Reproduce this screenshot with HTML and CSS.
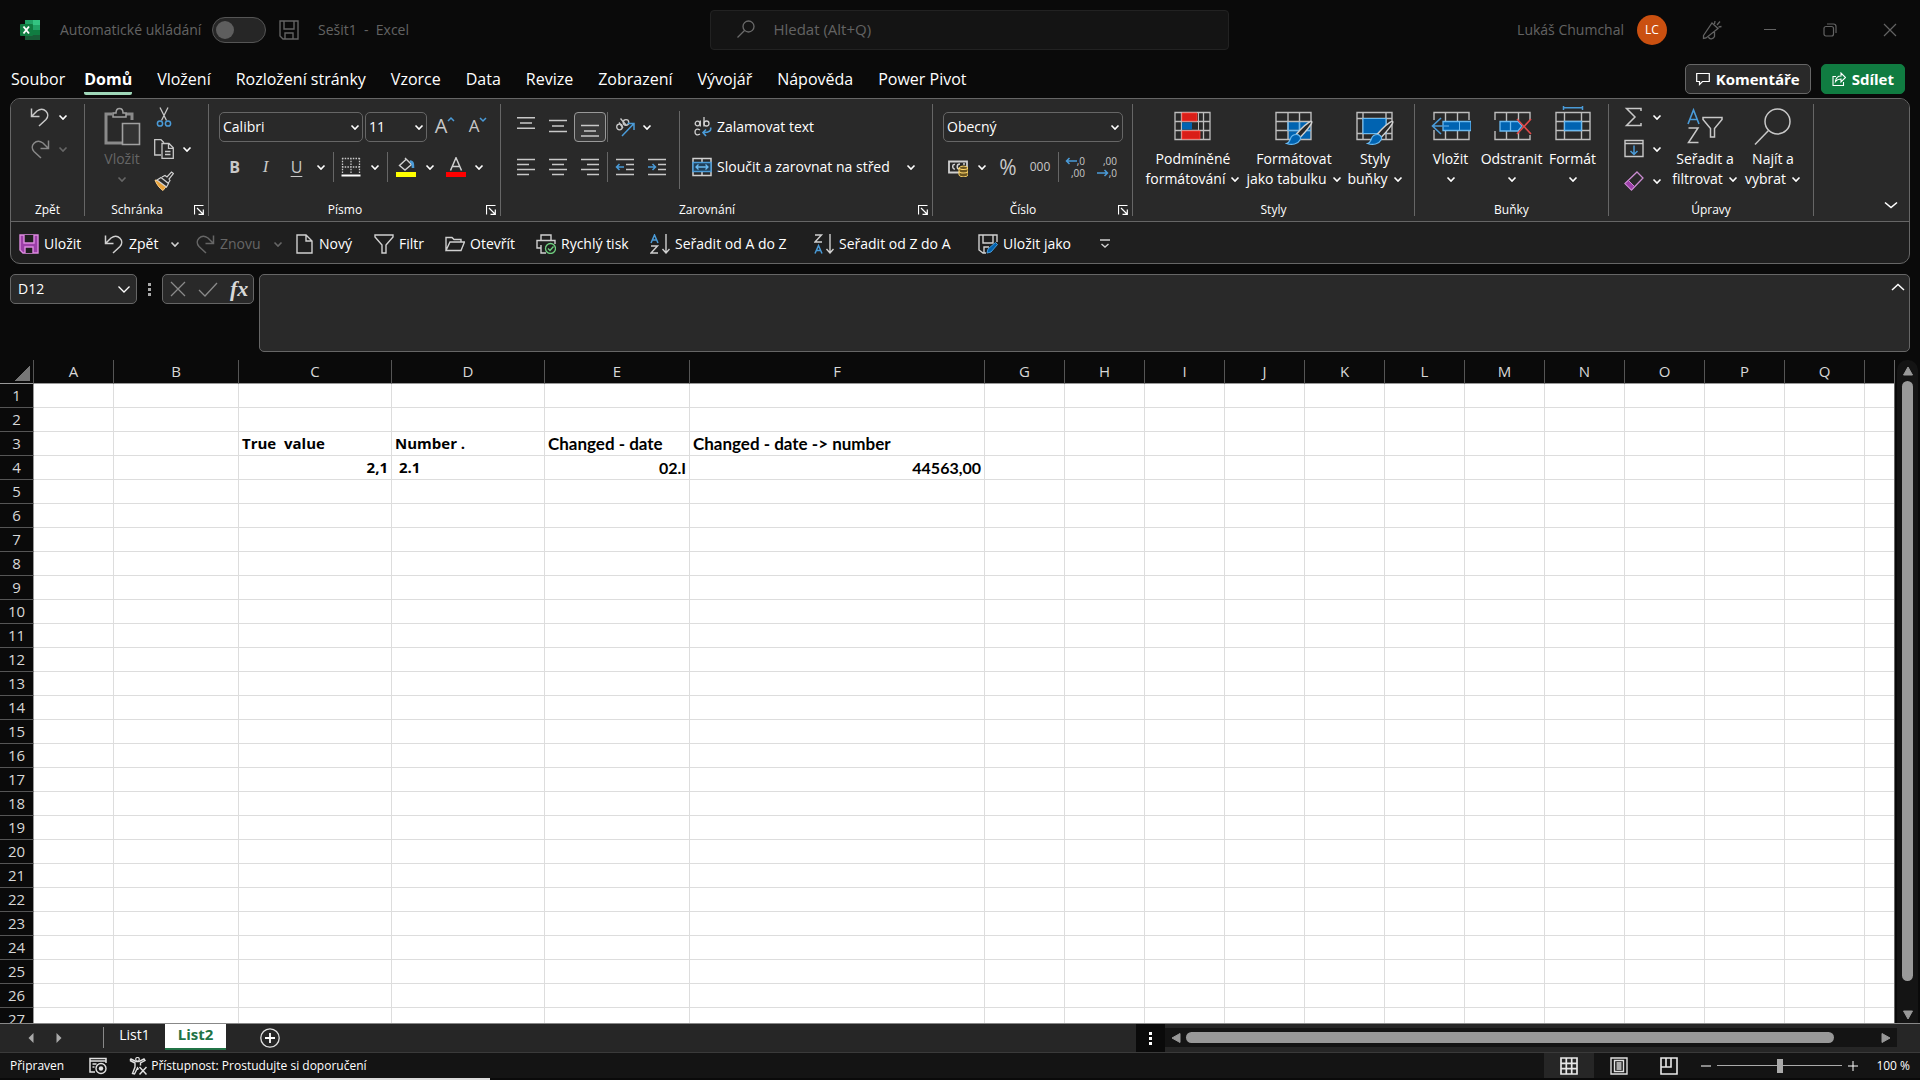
FILE: index.html
```html
<!DOCTYPE html>
<html lang="cs">
<head>
<meta charset="utf-8">
<title>Sešit1 - Excel</title>
<link rel="stylesheet" href="styles.css">
</head>
<body>
<svg class="sprite" aria-hidden="true">
  <symbol id="chev" viewBox="0 0 10 10"><path d="M1.500 3.500L5 7l3.500-3.500" fill="none" stroke="currentColor" stroke-width="1.600"/></symbol>
  <symbol id="undo" viewBox="0 0 20 20"><path d="M1.500 1.500v8h8M1.500 9.500L7 4c7-5 14 3 9 8.500L9 19" fill="none" stroke="currentColor" stroke-width="1.500"/></symbol>
  <symbol id="redo" viewBox="0 0 20 20"><path d="M18.500 1.500v8h-8M18.500 9.500L13 4C6-1-1 7 4 12.500L11 19" fill="none" stroke="currentColor" stroke-width="1.500"/></symbol>
  <symbol id="launch" viewBox="0 0 10 10"><path d="M.500 9.500V.500H9.500M3 3l6 6M9.300 4.500v4.800H4.500" fill="none" stroke="currentColor" stroke-width="1.200"/></symbol>
  <symbol id="save" viewBox="0 0 20 20"><path d="M1 1h18v18H4l-3-3zM5 1v8h10V1M6 19v-6h8v6" fill="none" stroke="currentColor" stroke-width="1.400"/></symbol>
  <symbol id="brush" viewBox="0 0 28 26"><path d="M26 1.500c2 1-7 11.500-11 15.500l-4-3C15 9 24 .500 26 1.500z" fill="#292929" stroke="#d0d0d0" stroke-width="1.500"/><path d="M11 14.500c3 0 5 3 3.500 5.500-2 4-8 5.500-13.500 3.500 3-1 3-2.500 4-5 1-3 3.500-4 6-4z" fill="#0063b1" stroke="#69b9f0" stroke-width="1.200"/></symbol>
</svg>

<header class="titlebar">
  <svg class="i20 logo" viewBox="0 0 20 20"><path d="M5 0h8v5H5z" fill="#21a366"/><path d="M13 0h7v5h-7z" fill="#33c481"/><path d="M5 5h8v5H5z" fill="#107c41"/><path d="M13 5h7v5h-7z" fill="#21a366"/><path d="M5 10h8v10H5z" fill="#185c37"/><path d="M13 10h7v5h-7z" fill="#107c41"/><path d="M13 15h7v5h-7z" fill="#185c37"/><rect y="4" width="13" height="12" rx="1" fill="#107c41"/><path d="M3.500 6.500l5.500 7M9 6.500l-5.500 7" stroke="#fff" stroke-width="1.900"/></svg>
  <label class="autosave" for="autosave">Automatické ukládání</label>
  <input class="toggle" id="autosave" type="checkbox">
  <button class="plain dim" aria-label="Uložit"><svg class="i20"><use href="#save"/></svg></button>
  <span class="docname">Sešit1&nbsp; -&nbsp; Excel</span>
  <div class="search">
    <svg class="i18" viewBox="0 0 18 18"><g fill="none" stroke="#6a6a6a" stroke-width="1.300"><circle cx="11.500" cy="6.500" r="5.500"/><path d="M7.500 10.500L.500 17.500"/></g></svg>
    <input type="text" aria-label="Hledat" placeholder="Hledat (Alt+Q)">
  </div>
  <div class="account">
    <span>Lukáš Chumchal</span>
    <span class="avatar">LC</span>
    <button class="plain mega" aria-label="Novinky"><svg class="i20" viewBox="0 0 20 20"><path d="M1.500 15.500L10 3l6 5.500L4 18l-2.500.500zM6.500 17c1 3 5 2 6-.500V11M12.500 4l.500-3M15 5l3-3.500M16.500 7l3-.500" fill="none" stroke="currentColor" stroke-width="1.300"/></svg></button>
    <button class="plain win" aria-label="Minimalizovat"><svg class="i14" viewBox="0 0 14 14"><path d="M1 6.500h12" stroke="currentColor"/></svg></button>
    <button class="plain win" aria-label="Obnovit"><svg class="i14" viewBox="0 0 14 14"><g fill="none" stroke="currentColor" stroke-width="1.200"><rect x="1" y="3.500" width="9.500" height="9.500" rx="2"/><path d="M4 1h6.500Q13 1 13 3.500V10"/></g></svg></button>
    <button class="plain win" aria-label="Zavřít"><svg class="i14" viewBox="0 0 14 14"><path d="M1 1l12 12M13 1L1 13" stroke="currentColor" stroke-width="1.200"/></svg></button>
  </div>
</header>

<nav class="tabs">
  <a href="#" class="file">Soubor</a><a href="#" class="active">Domů</a><a href="#">Vložení</a><a href="#">Rozložení stránky</a><a href="#">Vzorce</a><a href="#">Data</a><a href="#">Revize</a><a href="#">Zobrazení</a><a href="#">Vývojář</a><a href="#">Nápověda</a><a href="#">Power Pivot</a>
  <div class="tab-actions">
    <button class="pill"><svg class="i14" viewBox="0 0 14 14"><path d="M.700 1.500h12.600v8H6.500L3.500 12.500v-3H.700z" fill="none" stroke="currentColor" stroke-width="1.200"/></svg>Komentáře</button>
    <button class="pill share"><svg class="i14" viewBox="0 0 14 14"><path d="M4 4.500H1v9h10.500V10M3.500 9.500c.500-4 2.500-5.500 5.500-5.500V1l4.500 4.500L9 10V7C6.500 7 5 7.500 3.500 9.500z" fill="none" stroke="currentColor" stroke-width="1.100"/></svg>Sdílet</button>
  </div>
</nav>

<section class="ribbon">
  <div class="groups">
    <div class="group g-undo">
      <div class="body stack">
        <div class="line"><button class="tool s24" aria-label="Zpět"><svg class="i20"><use href="#undo"/></svg></button><button class="drop w22" aria-label="Další"><svg class="i10"><use href="#chev"/></svg></button></div>
        <div class="line off"><button class="tool s24" aria-label="Znovu"><svg class="i20"><use href="#redo"/></svg></button><button class="drop w22" aria-label="Další"><svg class="i10"><use href="#chev"/></svg></button></div>
      </div>
      <div class="caption"><span>Zpět</span></div>
    </div>
    <i class="sep"></i>
    <div class="group g-clip">
      <div class="body">
        <button class="big b60 off"><svg class="pic" viewBox="0 0 40 40"><g fill="none" stroke="#a0a0a0"><path d="M10 8H4v29h17M24 8h6v6" stroke-width="3" stroke="#8a8a8a"/><path d="M11 11V7h3c0-6 7-6 7 0h3v4z" fill="#292929" stroke-width="1.500"/><path d="M20.500 17.500h17v21h-17z" stroke-width="1.600" fill="#333"/></g></svg><span>Vložit</span><svg class="i10"><use href="#chev"/></svg></button>
        <div class="stack">
          <div class="line"><button class="tool s24" aria-label="Vyjmout"><svg class="i20" viewBox="0 0 20 20"><path d="M6 .500l6.500 13M14 .500L7.500 13.500" stroke="#c8c8c8" stroke-width="1.300"/><g fill="none" stroke="#4a9bd8" stroke-width="1.500"><circle cx="6" cy="16.500" r="2.600"/><circle cx="14" cy="16.500" r="2.600"/></g></svg></button></div>
          <div class="line"><button class="tool s24" aria-label="Kopírovat"><svg class="i20" viewBox="0 0 20 20"><g fill="none" stroke="#c8c8c8" stroke-width="1.300"><path d="M7 16H.700V.700H7l3 3"/><path d="M8 4.500h7l4.300 4.300v10.500H8zM14.500 4.500v4.800h4.800M11 12.500h5.500M11 15.500h5.500"/></g></svg></button><button class="drop w22" aria-label="Další"><svg class="i10"><use href="#chev"/></svg></button></div>
          <div class="line"><button class="tool s24" aria-label="Kopírovat formát"><svg class="i20" viewBox="0 0 20 20"><path d="M1 9l6 1.500L12.500 15 9 19.500C5 17 2.500 13 1 9z" fill="#e8a23a" stroke="#ffd08a"/><path d="M3 9l4-2.500 7.500 6-2 3.500zM8 6l3-1.500 2 1.500 4.500-5 2 1.500-4.500 5.500 1 1.500-2 3" fill="#292929" stroke="#d0d0d0" stroke-width="1.200"/></svg></button></div>
        </div>
      </div>
      <div class="caption"><span>Schránka</span><button class="plain" aria-label="Nastavení schránky"><svg class="i10"><use href="#launch"/></svg></button></div>
    </div>
    <i class="sep"></i>
    <div class="group g-font">
      <div class="body rows">
        <div class="line gap2">
          <label class="combo c144"><select aria-label="Písmo"><option>Calibri</option></select><svg class="i10"><use href="#chev"/></svg></label>
          <label class="combo c62"><select aria-label="Velikost písma"><option>11</option></select><svg class="i10"><use href="#chev"/></svg></label>
          <button class="tool s32 grow" aria-label="Zvětšit písmo">A<svg class="i8" viewBox="0 0 8 8"><path d="M1 5l3-3 3 3" fill="none" stroke="#4a9bd8" stroke-width="1.500"/></svg></button>
          <button class="tool s30 shrink" aria-label="Zmenšit písmo">A<svg class="i8" viewBox="0 0 8 8"><path d="M1 2l3 3 3-3" fill="none" stroke="#4a9bd8" stroke-width="1.500"/></svg></button>
        </div>
        <div class="line">
          <button class="tool s31 bold">B</button><button class="tool s31 italic">I</button><button class="tool s31 under">U</button><button class="drop w18" aria-label="Další"><svg class="i10"><use href="#chev"/></svg></button><i class="tick"></i>
          <button class="tool s30" aria-label="Ohraničení"><svg class="i20" viewBox="0 0 20 20"><path d="M1 1.500h18M1 10h18M1.500 1v16M10 1v16M18.500 1v16" stroke="#c8c8c8" stroke-width="1.300" stroke-dasharray="1.500 1.200"/><path d="M.500 18.500h19" stroke="#fff" stroke-width="2"/></svg></button><button class="drop w18" aria-label="Další"><svg class="i10"><use href="#chev"/></svg></button><i class="tick"></i>
          <button class="tool s31" aria-label="Barva výplně"><svg class="i20" viewBox="0 0 20 20"><path d="M9 1l6.500 6.500L9 13 3.500 8.500 10.500 2" fill="none" stroke="#d0d0d0" stroke-width="1.400"/><path d="M14 4.500c3 0 3 3 3 6.500" fill="none" stroke="#4a9bd8" stroke-width="2.600"/><path d="M0 15h20v5H0z" fill="#ff0"/></svg></button><button class="drop w18" aria-label="Další"><svg class="i10"><use href="#chev"/></svg></button>
          <button class="tool s34" aria-label="Barva písma"><svg class="i20" viewBox="0 0 20 20"><path d="M4.500 13.500L10 .800l5.500 12.700M6.500 9.500h7" fill="none" stroke="#d0d0d0" stroke-width="1.500"/><path d="M0 15h20v5H0z" fill="#f00"/></svg></button><button class="drop w12" aria-label="Další"><svg class="i10"><use href="#chev"/></svg></button>
        </div>
      </div>
      <div class="caption"><span>Písmo</span><button class="plain" aria-label="Nastavení písma"><svg class="i10"><use href="#launch"/></svg></button></div>
    </div>
    <i class="sep"></i>
    <div class="group g-align">
      <div class="body">
        <div class="rows left">
          <div class="line">
            <button class="tool s32" aria-label="Zarovnat nahoru"><svg class="i20" viewBox="0 0 20 20"><path d="M1 .800h18M4 6h12M1 11.200h18" stroke="#c8c8c8" stroke-width="1.500"/></svg></button>
            <button class="tool s32" aria-label="Zarovnat na střed"><svg class="i20" viewBox="0 0 20 20"><path d="M1 3.500h18M4 9h12M1 14.500h18" stroke="#c8c8c8" stroke-width="1.500"/></svg></button>
            <button class="tool s32 pressed" aria-label="Zarovnat dolů"><svg class="i20" viewBox="0 0 20 20"><path d="M1 8.500h18M4 14h12M1 19h18" stroke="#c8c8c8" stroke-width="1.500"/></svg></button><i class="tick tight"></i>
            <button class="tool s32" aria-label="Orientace"><svg class="i20" viewBox="0 0 20 20"><g fill="none" stroke="#c8c8c8" stroke-width="1.300"><circle cx="4.500" cy="10" r="2.800"/><path d="M4 5.500l4 5.500"/><path d="M5.500 1.500l6 7"/><circle cx="11" cy="5.500" r="2.800"/></g><path d="M7 19L18.500 7M12.500 6.500h6.500V13" fill="none" stroke="#4a9bd8" stroke-width="1.500"/></svg></button><button class="drop w12" aria-label="Další"><svg class="i10"><use href="#chev"/></svg></button>
          </div>
          <div class="line">
            <button class="tool s32" aria-label="Vlevo"><svg class="i20" viewBox="0 0 20 20"><path d="M1 2.500h18M1 7.500h12M1 12.500h18M1 17.500h12" stroke="#c8c8c8" stroke-width="1.500"/></svg></button>
            <button class="tool s32" aria-label="Na střed"><svg class="i20" viewBox="0 0 20 20"><path d="M1 2.500h18M4 7.500h12M1 12.500h18M4 17.500h12" stroke="#c8c8c8" stroke-width="1.500"/></svg></button>
            <button class="tool s32" aria-label="Vpravo"><svg class="i20" viewBox="0 0 20 20"><path d="M1 2.500h18M7 7.500h12M1 12.500h18M7 17.500h12" stroke="#c8c8c8" stroke-width="1.500"/></svg></button><i class="tick tight"></i>
            <button class="tool s32" aria-label="Zmenšit odsazení"><svg class="i20" viewBox="0 0 20 20"><path d="M1 2.500h18M11 7.500h8M11 12.500h8M1 17.500h18" stroke="#c8c8c8" stroke-width="1.500"/><path d="M9 10H1.500M4.500 7l-3 3 3 3" fill="none" stroke="#4a9bd8" stroke-width="1.500"/></svg></button>
            <button class="tool s32" aria-label="Zvětšit odsazení"><svg class="i20" viewBox="0 0 20 20"><path d="M1 2.500h18M11 7.500h8M11 12.500h8M1 17.500h18" stroke="#c8c8c8" stroke-width="1.500"/><path d="M1 10h7.500M5.500 7l3 3-3 3" fill="none" stroke="#4a9bd8" stroke-width="1.500"/></svg></button>
          </div>
        </div>
        <i class="mid"></i>
        <div class="rows right">
          <button class="wide"><svg class="i20" viewBox="0 0 20 20"><g fill="none" stroke="#d0d0d0" stroke-width="1.300"><circle cx="5.500" cy="6.500" r="2.300"/><path d="M8.300 3.500v6M12 0v9.500"/><circle cx="14.500" cy="6.500" r="2.500"/><path d="M8 13c-3-2-5-.500-5 2s2 4 5 2"/></g><path d="M18.500 10.500c1 3-1 5-7 5M14 12.500l-3 3 3 3.500" fill="none" stroke="#4a9bd8" stroke-width="1.600"/></svg>Zalamovat text</button>
          <div class="line"><button class="wide merge"><svg class="i20" viewBox="0 0 20 20"><path d="M1 1.500h18v17H1zM10 1v18" fill="none" stroke="#d0d0d0" stroke-width="1.500"/><path d="M1 5.500h18v9H1z" fill="#20405a" stroke="#4a9bd8" stroke-width="1.500"/><path d="M4 10h12M6.500 7.500L4 10l2.500 2.500M13.500 7.500L16 10l-2.500 2.500" fill="none" stroke="#69b9f0" stroke-width="1.300"/></svg>Sloučit a zarovnat na střed</button><button class="drop w18" aria-label="Další"><svg class="i10"><use href="#chev"/></svg></button></div>
        </div>
      </div>
      <div class="caption"><span>Zarovnání</span><button class="plain" aria-label="Nastavení zarovnání"><svg class="i10"><use href="#launch"/></svg></button></div>
    </div>
    <i class="sep"></i>
    <div class="group g-num">
      <div class="body rows">
        <div class="line"><label class="combo c180"><select aria-label="Formát čísla"><option>Obecný</option></select><svg class="i10"><use href="#chev"/></svg></label></div>
        <div class="line">
          <button class="tool s30" aria-label="Měna"><svg class="i20" viewBox="0 0 20 20"><path d="M1 4.500h18v11H1z" fill="none" stroke="#d0d0d0" stroke-width="1.800"/><path d="M7 7.500c-3-1-3 5 0 4.500M12 7c-4 0-3 5-1 5M15 7h2" fill="none" stroke="#d0d0d0" stroke-width="1.500"/><path d="M11 11v7c1 2.500 8 2.500 9 0v-7c-1-2.500-8-2.500-9 0z" fill="#6b5520" stroke="#ffd66b"/><path d="M11 11c1 2 8 2 9 0M11 14.500c1 2 8 2 9 0" fill="none" stroke="#ffd66b" stroke-width="1.200"/></svg></button><button class="drop w18" aria-label="Další"><svg class="i10"><use href="#chev"/></svg></button>
          <button class="tool s34 pct">%</button><button class="tool s30 zeros">000</button><i class="tick"></i>
          <button class="tool s30 dec" aria-label="Přidat desetinné místo"><span><svg class="ar" viewBox="0 0 12 8"><path d="M12 4H1.500M4.500 1l-3 3 3 3" fill="none" stroke="#4a9bd8" stroke-width="1.500"/></svg>,0</span><span>,00</span></button>
          <button class="tool s32 dec" aria-label="Odebrat desetinné místo"><span>,00</span><span><svg class="ar" viewBox="0 0 12 8"><path d="M0 4h10.500M7.500 1l3 3-3 3" fill="none" stroke="#4a9bd8" stroke-width="1.500"/></svg>,0</span></button>
        </div>
      </div>
      <div class="caption"><span>Číslo</span><button class="plain" aria-label="Nastavení čísla"><svg class="i10"><use href="#launch"/></svg></button></div>
    </div>
    <i class="sep"></i>
    <div class="group g-style">
      <div class="body">
        <button class="big b98"><svg class="pic" viewBox="0 0 40 40"><path d="M2 6.500h35v27H2zM2 15.500h35M2 24.500h35M8.500 6v28M30.500 6v28" fill="none" stroke="#bdbdbd" stroke-width="1.300"/><path d="M25.500 6v28" stroke="#bdbdbd"/><path d="M9 7h15v8H9zM9 25h18v8H9z" fill="#d91e18" stroke="#ff4238" stroke-width=".800"/><path d="M9 16.500h10v7H9z" fill="#0063b1"/></svg><span>Podmíněné</span><span>formátování <svg class="i10"><use href="#chev"/></svg></span></button>
        <button class="big b104"><svg class="pic" viewBox="0 0 40 40"><path d="M14 15.500h23v18H14z" fill="#0063b1"/><path d="M2 6.500h35v27H2zM2 15.500h35M2 24.500h35M14 6v28M25.500 6v28" fill="none" stroke="#bdbdbd" stroke-width="1.400"/><path d="M14 16v9M25.500 16v9M14 24.500h23" stroke="#69b9f0" stroke-width="1.200"/><use href="#brush" x="11" y="14" width="29" height="26"/></svg><span>Formátovat</span><span>jako tabulku <svg class="i10"><use href="#chev"/></svg></span></button>
        <button class="big b58"><svg class="pic" viewBox="0 0 40 40"><path d="M2 6.500h35v27H2zM2 12.500h35M2 27.500h35M8 6v28M31 6v28" fill="none" stroke="#bdbdbd" stroke-width="1.400"/><path d="M8 12.500h23v15H8z" fill="#0063b1" stroke="#69b9f0" stroke-width="1.200"/><use href="#brush" x="11" y="14" width="29" height="26"/></svg><span>Styly</span><span>buňky <svg class="i10"><use href="#chev"/></svg></span></button>
      </div>
      <div class="caption"><span>Styly</span></div>
    </div>
    <i class="sep"></i>
    <div class="group g-cells">
      <div class="body">
        <button class="big b61"><svg class="pic" viewBox="0 0 40 40"><path d="M3 14V6.500h35V14M3 24v9.500h35V24M14.500 6v28M26.500 6v28" fill="none" stroke="#bdbdbd" stroke-width="1.400"/><path d="M12 15.500h28v9H12z" fill="#0063b1" stroke="#69b9f0" stroke-width="1.300"/><path d="M28.500 15v10" stroke="#69b9f0"/><path d="M18 20H1.500M10 12l-8.500 8 8.500 8" fill="none" stroke="#4a9bd8" stroke-width="1.600"/></svg><span>Vložit</span><svg class="i10"><use href="#chev"/></svg></button>
        <button class="big b61"><svg class="pic" viewBox="0 0 40 40"><path d="M3 14V6.500h35V14M3 25v8.500h35V29M14.500 6v9M26.500 6v8M14.500 25v9M26.500 25v9" fill="none" stroke="#bdbdbd" stroke-width="1.400"/><path d="M8 15.500h18l4 4.500-4 5H8zM18.500 15.500v9" fill="#0063b1" stroke="#69b9f0" stroke-width="1.300"/><path d="M25 13l14 15M39 13L25 28" stroke="#e04a4a" stroke-width="1.600"/></svg><span>Odstranit</span><svg class="i10"><use href="#chev"/></svg></button>
        <button class="big b61"><svg class="pic" viewBox="0 0 40 40"><path d="M3 6.500h34v27H3zM3 15.500h34M3 24.500h34M11.500 6v28M28.500 6v28" fill="none" stroke="#bdbdbd" stroke-width="1.400"/><path d="M11.500 15.500h17v9h-17z" fill="#0063b1" stroke="#69b9f0" stroke-width="1.300"/><path d="M10.500 1.800h19M10.500 0v4M29.500 0v4" stroke="#4a9bd8" stroke-width="1.500"/></svg><span>Formát</span><svg class="i10"><use href="#chev"/></svg></button>
      </div>
      <div class="caption"><span>Buňky</span></div>
    </div>
    <i class="sep"></i>
    <div class="group g-edit">
      <div class="body">
        <div class="stack">
          <div class="line"><button class="tool s28" aria-label="Součet"><svg class="i20" viewBox="0 0 20 20"><path d="M17 4V1.500H2.500L11 10 2.500 18.500H17V16" fill="none" stroke="#c8c8c8" stroke-width="1.500"/></svg></button><button class="drop w18" aria-label="Další"><svg class="i10"><use href="#chev"/></svg></button></div>
          <div class="line"><button class="tool s28" aria-label="Výplň"><svg class="i20" viewBox="0 0 20 20"><path d="M1 1.500h18v16H1zM1 4.500h18" fill="none" stroke="#c8c8c8" stroke-width="1.400"/><path d="M10 6.500v9M6.500 12l3.500 3.500 3.500-3.500" fill="none" stroke="#4a9bd8" stroke-width="1.500"/></svg></button><button class="drop w18" aria-label="Další"><svg class="i10"><use href="#chev"/></svg></button></div>
          <div class="line"><button class="tool s28" aria-label="Vymazat"><svg class="i20" viewBox="0 0 20 20"><path d="M13 1l6 6L7.500 19 1 12.500z" fill="#292929" stroke="#c98bd0" stroke-width="1.300"/><path d="M4.500 9.500l6 6L7.500 19 1 12.500z" fill="#9c3fa8" stroke="#c98bd0"/></svg></button><button class="drop w18" aria-label="Další"><svg class="i10"><use href="#chev"/></svg></button></div>
        </div>
        <button class="big b78"><svg class="pic" viewBox="0 0 40 40"><path d="M3 18L8.500 4 14 18M5 13.500h7" fill="none" stroke="#4a9bd8" stroke-width="1.600"/><path d="M3.500 22h9.500L3.500 36.500h10M18 11.500h19v2l-7.500 9V31h-4v-8.500l-7.500-9z" fill="none" stroke="#c8c8c8" stroke-width="1.500"/></svg><span>Seřadit a</span><span>filtrovat <svg class="i10"><use href="#chev"/></svg></span></button>
        <button class="big b58"><svg class="pic" viewBox="0 0 40 40"><g fill="none" stroke="#c8c8c8" stroke-width="1.500"><circle cx="24.500" cy="15.500" r="12.500"/><path d="M15.500 24.500L2 38.500"/></g></svg><span>Najít a</span><span>vybrat <svg class="i10"><use href="#chev"/></svg></span></button>
      </div>
      <div class="caption"><span>Úpravy</span></div>
    </div>
    <i class="sep"></i>
    <button class="plain collapse" aria-label="Sbalit pás karet"><svg class="i14" viewBox="0 0 14 14"><path d="M1 4.500l6 5 6-5" fill="none" stroke="currentColor" stroke-width="1.600"/></svg></button>
  </div>
  <div class="qat">
    <button class="q-save"><svg class="i20" viewBox="0 0 20 20"><path d="M1 1h18v18H4l-3-3z" fill="#9c3fa8" stroke="#dd8be0" stroke-width="1.400"/><path d="M5 1v8h10V1M6 19v-6h8v6" fill="#1f1f1f" stroke="#dd8be0" stroke-width="1.400"/></svg>Uložit</button>
    <button class="q-undo"><svg class="i20"><use href="#undo"/></svg>Zpět<svg class="i10 gap"><use href="#chev"/></svg></button>
    <button class="q-redo off"><svg class="i20"><use href="#redo"/></svg>Znovu<svg class="i10 gap"><use href="#chev"/></svg></button>
    <button class="q-new"><svg class="i18t" viewBox="0 0 18 20"><path d="M1 1h9l6 6v12H1zM10 1v6h6" fill="none" stroke="currentColor" stroke-width="1.400"/></svg>Nový</button>
    <button class="q-filter"><svg class="i20" viewBox="0 0 20 20"><path d="M1 1h18v2l-7 8v8H8v-8L1 3z" fill="none" stroke="currentColor" stroke-width="1.400"/></svg>Filtr</button>
    <button class="q-open"><svg class="i20" viewBox="0 0 20 20"><path d="M1 16V3.500h6l2 2h7V8M1 16.500L5 8h14.500L16 16.500z" fill="none" stroke="currentColor" stroke-width="1.400"/></svg>Otevřít</button>
    <button class="q-print"><svg class="i20" viewBox="0 0 20 20"><path d="M5 6V1h10v5M5 14H1V6.500h18V10M5 11v8h5" fill="none" stroke="currentColor" stroke-width="1.400"/><circle cx="14.500" cy="14.500" r="5" fill="#1f1f1f" stroke="#6fcf7f" stroke-width="1.300"/><path d="M12 14.500l2 2 3.500-4" fill="none" stroke="#6fcf7f" stroke-width="1.400"/></svg>Rychlý tisk</button>
    <button class="q-sort"><svg class="i20" viewBox="0 0 20 20"><path d="M1 9l3.500-8L8 9M2.500 6h4" fill="none" stroke="#4a9bd8" stroke-width="1.500"/><path d="M1 12h6.500L1 19h7M16 0v18.500M12.500 15l3.500 4 3.500-4" fill="none" stroke="currentColor" stroke-width="1.400"/></svg>Seřadit od A do Z</button>
    <button class="q-sort"><svg class="i20" viewBox="0 0 20 20"><path d="M1 19.500l3.500-8 3.500 8M2.500 16.500h4" fill="none" stroke="#4a9bd8" stroke-width="1.500"/><path d="M1 1h6.500L1 8h7M16 0v18.500M12.500 15l3.500 4 3.500-4" fill="none" stroke="currentColor" stroke-width="1.400"/></svg>Seřadit od Z do A</button>
    <button class="q-saveas"><svg class="i20" viewBox="0 0 20 20"><path d="M8 19H5l-4-3V1h18v7M5 1v8h10V1M6 19v-6h5" fill="none" stroke="currentColor" stroke-width="1.400"/><path d="M9 19l1-4 7.500-6.500 2 2L13 18z" fill="#0063b1" stroke="#4a9bd8"/></svg>Uložit jako</button>
    <button aria-label="Přizpůsobit"><svg class="i10" viewBox="0 0 10 10"><path d="M0 1h10M1.500 5L5 8l3.500-3" fill="none" stroke="currentColor" stroke-width="1.400"/></svg></button>
  </div>
</section>

<section class="formula">
  <div class="namebox"><input type="text" aria-label="Pole názvů" value="D12"><button class="plain" aria-label="Seznam názvů"><svg class="i14" viewBox="0 0 14 14"><path d="M1.500 4.500L7 10l5.500-5.500" fill="none" stroke="currentColor" stroke-width="1.300"/></svg></button></div>
  <i class="dots"></i>
  <div class="fx">
    <button class="plain" aria-label="Zrušit"><svg class="i20" viewBox="0 0 20 20"><path d="M3 3l14 14M17 3L3 17" stroke="#8a8a8a" stroke-width="1.300"/></svg></button>
    <button class="plain" aria-label="Zadat"><svg class="i20" viewBox="0 0 20 20"><path d="M1 11l6 6L19 4" fill="none" stroke="#8a8a8a" stroke-width="1.300"/></svg></button>
    <button class="plain fxb" aria-label="Vložit funkci"><em>fx</em></button>
  </div>
  <div class="bar"><textarea aria-label="Řádek vzorců"></textarea><button class="plain" aria-label="Sbalit řádek vzorců"><svg class="i14" viewBox="0 0 14 14"><path d="M1 10l6-5.500L13 10" fill="none" stroke="currentColor" stroke-width="1.500"/></svg></button></div>
</section>

<main class="sheet">
  <div class="viewport"><table class="grid" id="grid"></table></div>
  <div class="vscroll"><svg class="i10" viewBox="0 0 10 10"><path d="M5 1l4.500 8h-9z" fill="#999" stroke="#999" stroke-linejoin="round"/></svg><i class="thumb"></i><svg class="i10" viewBox="0 0 10 10"><path d="M5 9L.500 1h9z" fill="#999" stroke="#999" stroke-linejoin="round"/></svg></div>
</main>

<footer>
  <div class="sheetbar">
    <div class="sheetnav"><button class="plain" aria-label="Předchozí list"><svg class="i10" viewBox="0 0 10 10"><path d="M7.500 0v10L2.500 5z" fill="#aaa"/></svg></button><button class="plain" aria-label="Další list"><svg class="i10" viewBox="0 0 10 10"><path d="M2.500 0v10l5-5z" fill="#aaa"/></svg></button></div>
    <i class="navsep"></i>
    <a href="#" class="list">List1</a><a href="#" class="list current">List2</a>
    <button class="plain add" aria-label="Nový list"><svg class="i20" viewBox="0 0 20 20"><circle cx="10" cy="10" r="9.200" fill="none" stroke="#e0e0e0" stroke-width="1.300"/><path d="M10 5v10M5 10h10" stroke="#fff" stroke-width="1.800"/></svg></button>
    <div class="split"><i class="dots white"></i></div>
    <div class="hscroll"><svg class="i10" viewBox="0 0 10 10"><path d="M1 5l8-4.500v9z" fill="#999" stroke="#999" stroke-linejoin="round"/></svg><i class="thumb"></i><svg class="i10" viewBox="0 0 10 10"><path d="M9 5L1 .500v9z" fill="#999" stroke="#999" stroke-linejoin="round"/></svg></div>
  </div>
  <div class="status">
    <span>Připraven</span>
    <button class="plain rec" aria-label="Záznam makra"><svg class="i18" viewBox="0 0 18 18"><path d="M6 15H1V1.500h16V6M1 4h16M3.500 7h4M3.500 10h2" fill="none" stroke="#e0e0e0" stroke-width="1.500"/><circle cx="12" cy="11.500" r="5" fill="#141414" stroke="#e0e0e0" stroke-width="1.400"/><circle cx="12" cy="11.500" r="2.200" fill="#e0e0e0"/></svg></button>
    <button class="plain access"><svg class="i18" viewBox="0 0 18 18"><path d="M1 3.500l5 2.500v4L3.500 16.500l2 .500L8.500 11l1 1.500M1 3.500L2 2l5 2.500h3L15 2l1 1.500L11.500 6v2.500" fill="none" stroke="#e0e0e0" stroke-width="1.400"/><circle cx="8.500" cy="2.300" r="1.800" fill="#141414" stroke="#e0e0e0" stroke-width="1.200"/><path d="M10.500 10l7 7.500M17.500 10l-7 7.500" stroke="#e0e0e0" stroke-width="1.500"/></svg>Přístupnost: Prostudujte si doporučení</button>
    <div class="views">
      <button class="plain on" aria-label="Normální"><svg class="i18" viewBox="0 0 18 18"><path d="M1 1h16v16H1zM1 6.300h16M1 11.700h16M6.300 1v16M11.700 1v16" fill="none" stroke="#e8e8e8" stroke-width="1.700"/></svg></button>
      <button class="plain" aria-label="Rozložení stránky"><svg class="i18" viewBox="0 0 18 18"><path d="M1 1h16v16H1zM4.500 3.500h9v11h-9zM6.500 6h5M6.500 8h5M6.500 10h5M6.500 12h5" fill="none" stroke="#e0e0e0" stroke-width="1.400"/></svg></button>
      <button class="plain" aria-label="Konce stránek"><svg class="i18" viewBox="0 0 18 18"><path d="M1 1h16v16H1zM1 10h10V1M6 1v9" fill="none" stroke="#e8e8e8" stroke-width="1.600"/></svg></button>
    </div>
    <button class="plain zoomb" aria-label="Oddálit"><svg class="i10" viewBox="0 0 10 10"><path d="M0 5h10" stroke="#fff"/></svg></button>
    <input class="zoom" type="range" min="0" max="100" value="50" aria-label="Lupa">
    <button class="plain zoomb" aria-label="Přiblížit"><svg class="i10" viewBox="0 0 10 10"><path d="M0 5h10M5 0v10" stroke="#fff"/></svg></button>
    <span class="percent">100 %</span>
  </div>
  <div class="strip"></div>
</footer>
<script src="script.js"></script>
</body>
</html>
```
FILE: styles.css
```css
* { box-sizing: border-box; }
html, body { height: 100%; }
body {
  margin: 0;
  display: flex;
  flex-direction: column;
  height: 100vh;
  overflow: hidden;
  background: #0a0a0a;
  color: #fff;
  font: 14px/20px "Open Sans", "Noto Sans", sans-serif;
}
button, input, select, textarea { font: inherit; color: inherit; }
button { margin: 0; padding: 0; border: 0; background: none; white-space: nowrap; }
a { color: inherit; text-decoration: none; }
svg { display: block; flex: none; }
.sprite { display: none; }
.i8 { width: 8px; height: 8px; }
.i10 { width: 10px; height: 10px; }
.i14 { width: 14px; height: 14px; }
.i18 { width: 18px; height: 18px; }
.i18t { width: 18px; height: 20px; }
.i20 { width: 20px; height: 20px; }
.plain { display: flex; align-items: center; justify-content: center; }

/* Title bar */
.titlebar {
  display: grid;
  grid-template-columns: 20px auto auto auto auto 1fr;
  align-items: center;
  flex: none;
  height: 60px;
  padding: 0 7px 0 20px;
  color: #636363;
  position: relative;
}
.autosave { margin-left: 20px; width: 152px; white-space: nowrap; }
.toggle {
  appearance: none;
  width: 54px;
  height: 26px;
  margin: 0 13px 0 0;
  padding: 3px;
  border: 1px solid #555;
  border-radius: 13px;
  background: #262626;
}
.toggle::before { content: ""; display: block; width: 18px; height: 18px; border-radius: 9px; background: #5e5e5e; }
.docname { margin-left: 19px; white-space: nowrap; }
.search {
  position: absolute;
  left: 37%;
  top: 10px;
  width: 27%;
  height: 40px;
  display: flex;
  align-items: center;
  gap: 18px;
  padding: 0 0 2px 26px;
  border: 1px solid #222;
  border-radius: 4px;
  background: #141414;
}
.search input { flex: 1; min-width: 0; padding: 0; border: 0; background: none; outline: 0; font-size: 15px; }
.search input::placeholder { color: #636363; opacity: 1; }
.account { display: flex; align-items: center; justify-self: end; }
.avatar {
  width: 30px;
  height: 30px;
  margin-left: 13px;
  border-radius: 15px;
  background: #ca5010;
  color: #fff;
  font-size: 12px;
  line-height: 30px;
  text-align: center;
}
.mega { margin: 0 18px 0 35px; }
.win { width: 60px; height: 40px; }
.win:last-child { width: 46px; margin-left: 7px; }

/* Ribbon tabs */
.tabs { display: flex; flex: none; gap: 25px; height: 38px; padding: 0 15px 0 11px; font-size: 16px; white-space: nowrap; }
.tabs > a { height: 35px; padding-top: 9px; border-bottom: 3px solid transparent; }
.tabs > .file { margin-right: -6px; }
.tabs > .active { font-weight: 700; border-color: #a0d8b9; border-radius: 2px; }
.tab-actions { display: flex; gap: 10px; margin-left: auto; padding-top: 4px; }
.pill {
  display: flex;
  align-items: center;
  justify-content: center;
  gap: 6px;
  height: 30px;
  padding: 0 10px;
  border: 1px solid #666;
  border-radius: 5px;
  background: #292929;
  font-size: 15px;
  font-weight: 700;
}
.share { border-color: #107c41; background: #107c41; }

/* Ribbon */
.ribbon { flex: none; margin: 0 10px; border: 1px solid #666; border-radius: 10px; background: #1f1f1f; overflow: hidden; }
.groups { display: flex; height: 123px; background: #292929; border-bottom: 1px solid #666; }
.sep { flex: none; width: 1px; margin: 5px 0; background: #666; }
.group { display: flex; flex-direction: column; flex: none; padding-top: 2px; }
.body { display: flex; height: 98px; }
.stack, .rows { display: flex; flex-direction: column; }
.stack .line { height: 32px; }
.rows { padding-top: 11px; gap: 10px; }
.rows .line { height: 30px; }
.line { display: flex; align-items: center; }
.gap2 { gap: 2px; }
.caption { display: flex; align-items: center; height: 22px; font-size: 12px; }
.caption span { flex: 1; text-align: center; }
.caption .plain { width: 19px; }
.off { color: #666; }
.g-undo { width: 73px; }
.g-undo .body { padding-left: 17px; }
.g-clip { width: 123px; }
.g-clip .body { padding-left: 7px; }
.g-font { width: 291px; }
.g-font .body { padding-left: 10px; }
.g-align { width: 431px; }
.g-num { width: 199px; }
.g-num .body { padding-left: 10px; }
.g-style { width: 281px; }
.g-style .body { padding-left: 11px; }
.g-cells { width: 193px; }
.g-cells .body { padding-left: 5px; }
.g-edit { width: 204px; }
.g-edit .body { padding-left: 11px; }
.left { width: 178px; padding-left: 9px; }
.right { padding-left: 12px; }
.mid { width: 1px; height: 78px; margin-top: 10px; background: #666; }
.tool, .drop { display: flex; align-items: center; justify-content: center; flex: none; height: 30px; color: #c8c8c8; }
.drop { color: #fff; }
.off .tool { color: #888; }
.off .drop { color: #666; }
.s24 { width: 24px; }
.s28 { width: 28px; }
.s30 { width: 30px; }
.s31 { width: 31px; }
.s32 { width: 32px; }
.s34 { width: 34px; }
.w12 { width: 12px; }
.w18 { width: 18px; }
.w22 { width: 22px; }
.tick { flex: none; width: 1px; height: 30px; margin: 0 2px 0 3px; background: #666; }
.tick.tight { margin: 0 1px; }
.pressed { border: 1px solid #999; border-radius: 4px; background: #383838; }
.grow { font-size: 20px; align-items: flex-start; padding-top: 4px; }
.shrink { font-size: 17px; align-items: flex-start; padding-top: 4px; }
.bold { font-weight: 700; font-size: 16px; }
.italic { font: italic 17px "Liberation Serif", serif; }
.under { font-size: 16px; text-decoration: underline; text-underline-offset: 3px; }
.pct { font-size: 21px; }
.zeros { font-size: 12px; }
.dec { flex-direction: column; align-items: flex-end; padding-right: 6px; font-size: 10px; line-height: 13px; }
.dec span { display: flex; align-items: center; height: 12px; }
.ar { width: 12px; height: 8px; }
.combo { display: grid; height: 30px; }
.combo > * { grid-area: 1 / 1; }
.combo select { appearance: none; width: 100%; padding: 0 3px; border: 1px solid #666; border-radius: 5px; background: #292929; outline: 0; }
.combo svg { place-self: center end; margin-right: 3px; pointer-events: none; }
.c144 { width: 144px; }
.c62 { width: 62px; }
.c180 { width: 180px; }
.wide { display: flex; align-items: center; gap: 5px; height: 30px; }
.merge { width: 210px; }
.big { display: flex; flex-direction: column; align-items: center; height: 98px; padding-top: 5px; }
.big .pic { width: 40px; height: 40px; margin-bottom: 3px; }
.big span { display: flex; align-items: center; gap: 5px; height: 20px; }
.big > .i10 { margin-top: 5px; }
.b58 { width: 58px; }
.b60 { width: 60px; }
.b61 { width: 61px; }
.b78 { width: 78px; }
.b98 { width: 98px; }
.b104 { width: 104px; }
.collapse { margin: auto 11px 9px auto; }

/* Quick access toolbar */
.qat { display: flex; height: 41px; padding: 2px 0 0 8px; }
.qat button { display: flex; align-items: center; gap: 5px; flex: none; }
.qat .gap { margin-left: 7px; }
.qat button svg { color: #d0d0d0; }
.qat .off svg { color: #666; }
.q-save { width: 85px; }
.q-undo { width: 91px; }
.q-redo { width: 101px; }
.q-new { width: 78px; }
.q-filter { width: 71px; }
.q-open { width: 91px; }
.q-print { width: 114px; }
.q-sort { width: 164px; }
.q-saveas { width: 122px; }

/* Formula bar */
.formula { display: flex; align-items: flex-start; flex: none; margin: 10px; margin-bottom: 8px; height: 78px; }
.namebox, .fx, .bar { border: 1px solid #666; border-radius: 5px; background: #292929; }
.namebox { display: flex; align-items: center; width: 127px; height: 30px; padding: 0 5px 0 7px; }
.namebox input { flex: 1; min-width: 0; padding: 0; border: 0; background: none; outline: 0; }
.dots {
  flex: none;
  width: 3px;
  height: 13px;
  margin: 9px 11px 0;
  background: repeating-linear-gradient(#aaa 0 3px, transparent 3px 5px);
}
.dots.white { margin: 0; background: repeating-linear-gradient(#fff 0 3px, transparent 3px 5px); }
.fx { display: flex; align-items: center; width: 92px; height: 30px; gap: 10px; padding-left: 5px; }
.fxb { margin-left: 2px; font: 700 22px/26px "Liberation Serif", serif; color: #d8d8d8; }
.bar { display: grid; flex: 1; height: 78px; margin-left: 5px; }
.bar > * { grid-area: 1 / 1; }
.bar textarea { width: 100%; height: 100%; padding: 4px 30px 4px 8px; border: 0; background: none; resize: none; outline: 0; }
.bar .plain { place-self: start end; margin: 5px 4px 0 0; }

/* Grid */
.sheet { display: flex; flex: 1; min-height: 0; }
.viewport { flex: 1; min-width: 0; overflow: hidden; border-right: 1px solid #666; }
.grid { width: 100%; table-layout: fixed; border-collapse: separate; border-spacing: 0; }
.grid th { padding: 0; border-right: 1px solid #555; border-bottom: 1px solid #555; background: #0a0a0a; color: #d8d8d8; font-size: 15px; font-weight: 400; text-align: center; }
.grid thead th { height: 24px; line-height: 23px; border-bottom-color: #999; }
.grid tbody th { height: 24px; line-height: 23px; border-right-color: #999; }
.grid tr > :last-child { border-right: 0; }
.grid td {
  height: 24px;
  padding: 0 3px;
  border-right: 1px solid #ddd;
  border-bottom: 1px solid #ddd;
  background: #fff;
  color: #000;
  font-size: 15px;
  font-weight: 700;
  line-height: 23px;
  white-space: pre;
}
.grid .lato { font-family: Lato, sans-serif; font-size: 17px; }
.grid .lato.num { font-size: 16px; }
.grid .num { text-align: right; }
.grid .indent { padding-left: 7px; }
.corner { display: block; width: 16px; height: 16px; margin: 3px 0 0 14px; background: linear-gradient(135deg, transparent 50%, #777 50%); }
.vscroll, .hscroll { display: flex; align-items: center; background: #141414; }
.vscroll { flex-direction: column; flex: none; width: 21px; margin: 0 2px; padding: 6px 0 3px; border-radius: 10px 10px 0 0; }
.thumb { border-radius: 6px; background: #999; }
.vscroll .thumb { width: 11px; flex: 1; margin: 5px 0 29px; }

/* Footer */
footer { flex: none; }
.sheetbar { display: flex; height: 29px; padding-right: 23px; border-top: 1px solid #888; background: #262626; }
.sheetnav { display: flex; gap: 18px; padding: 0 39px 0 26px; }
.navsep { width: 1px; margin: 3px 0 4px; background: #888; }
.list { width: 61px; height: 26px; line-height: 21px; text-align: center; }
.current { background: #fff; color: #217346; font-size: 15px; font-weight: 700; border-bottom: 2px solid #217346; }
.add { margin: 0 0 0 34px; }
.split { display: flex; align-items: center; justify-content: center; width: 29px; margin-left: auto; background: #0a0a0a; }
.hscroll { width: calc(40% - 27px); margin: 4px 0 5px; padding: 0 6px; }
.hscroll .thumb { flex: 1; height: 11px; margin: 0 47px 0 5px; }
.status { display: flex; align-items: center; height: 26px; padding: 0 10px; border-top: 1px solid #3a3a3a; background: #141414; font-size: 12px; white-space: nowrap; }
.rec { margin-left: 25px; }
.access { gap: 4px; margin-left: 22px; }
.views { display: flex; align-self: stretch; margin-left: auto; margin-right: 7px; }
.views .plain { width: 50px; }
.views .on { background: #262626; }
.zoomb { width: 10px; height: 20px; }
.zoom { appearance: none; width: 125px; height: 20px; margin: 0 6px; background: linear-gradient(#aaa, #aaa) center / 100% 1px no-repeat; }
.zoom::-webkit-slider-thumb { appearance: none; width: 6px; height: 14px; background: #aaa; }
.percent { width: 52px; text-align: right; }
.strip { width: 430px; height: 2px; margin-left: 60px; background: #ddd; }
```
FILE: script.js
```js
// Column widths in pixels; the last, unnamed column takes what is left.
const columns = { A: 80, B: 125, C: 153, D: 153, E: 145, F: 295, G: 80, H: 80, I: 80, J: 80, K: 80, L: 80, M: 80, N: 80, O: 80, P: 80, Q: 80 };
const cells = {
  C3: ["True  value", ""],
  D3: ["Number .", ""],
  E3: ["Changed - date", "lato"],
  F3: ["Changed - date -> number", "lato"],
  C4: ["2,1", "num"],
  D4: ["2.1", "indent"],
  E4: ["02.I", "lato num"],
  F4: ["44563,00", "lato num"]
};
const names = [...Object.keys(columns), ""];
const cols = Object.values(columns).map(w => `<col style="width:${w}px">`).join("");
const head = names.map(n => `<th scope="col">${n}</th>`).join("");
let rows = "";
for (let r = 1; r <= 27; r++) {
  rows += `<tr><th scope="row">${r}</th>` + names.map(n => {
    const [text, cls] = cells[n + r] || ["", ""];
    return `<td class="${cls}">${text.replace(">", "&gt;")}</td>`;
  }).join("") + "</tr>";
}
document.getElementById("grid").innerHTML =
  `<colgroup><col style="width:34px">${cols}<col></colgroup><thead><tr><th><i class="corner"></i></th>${head}</tr></thead><tbody>${rows}</tbody>`;
```
